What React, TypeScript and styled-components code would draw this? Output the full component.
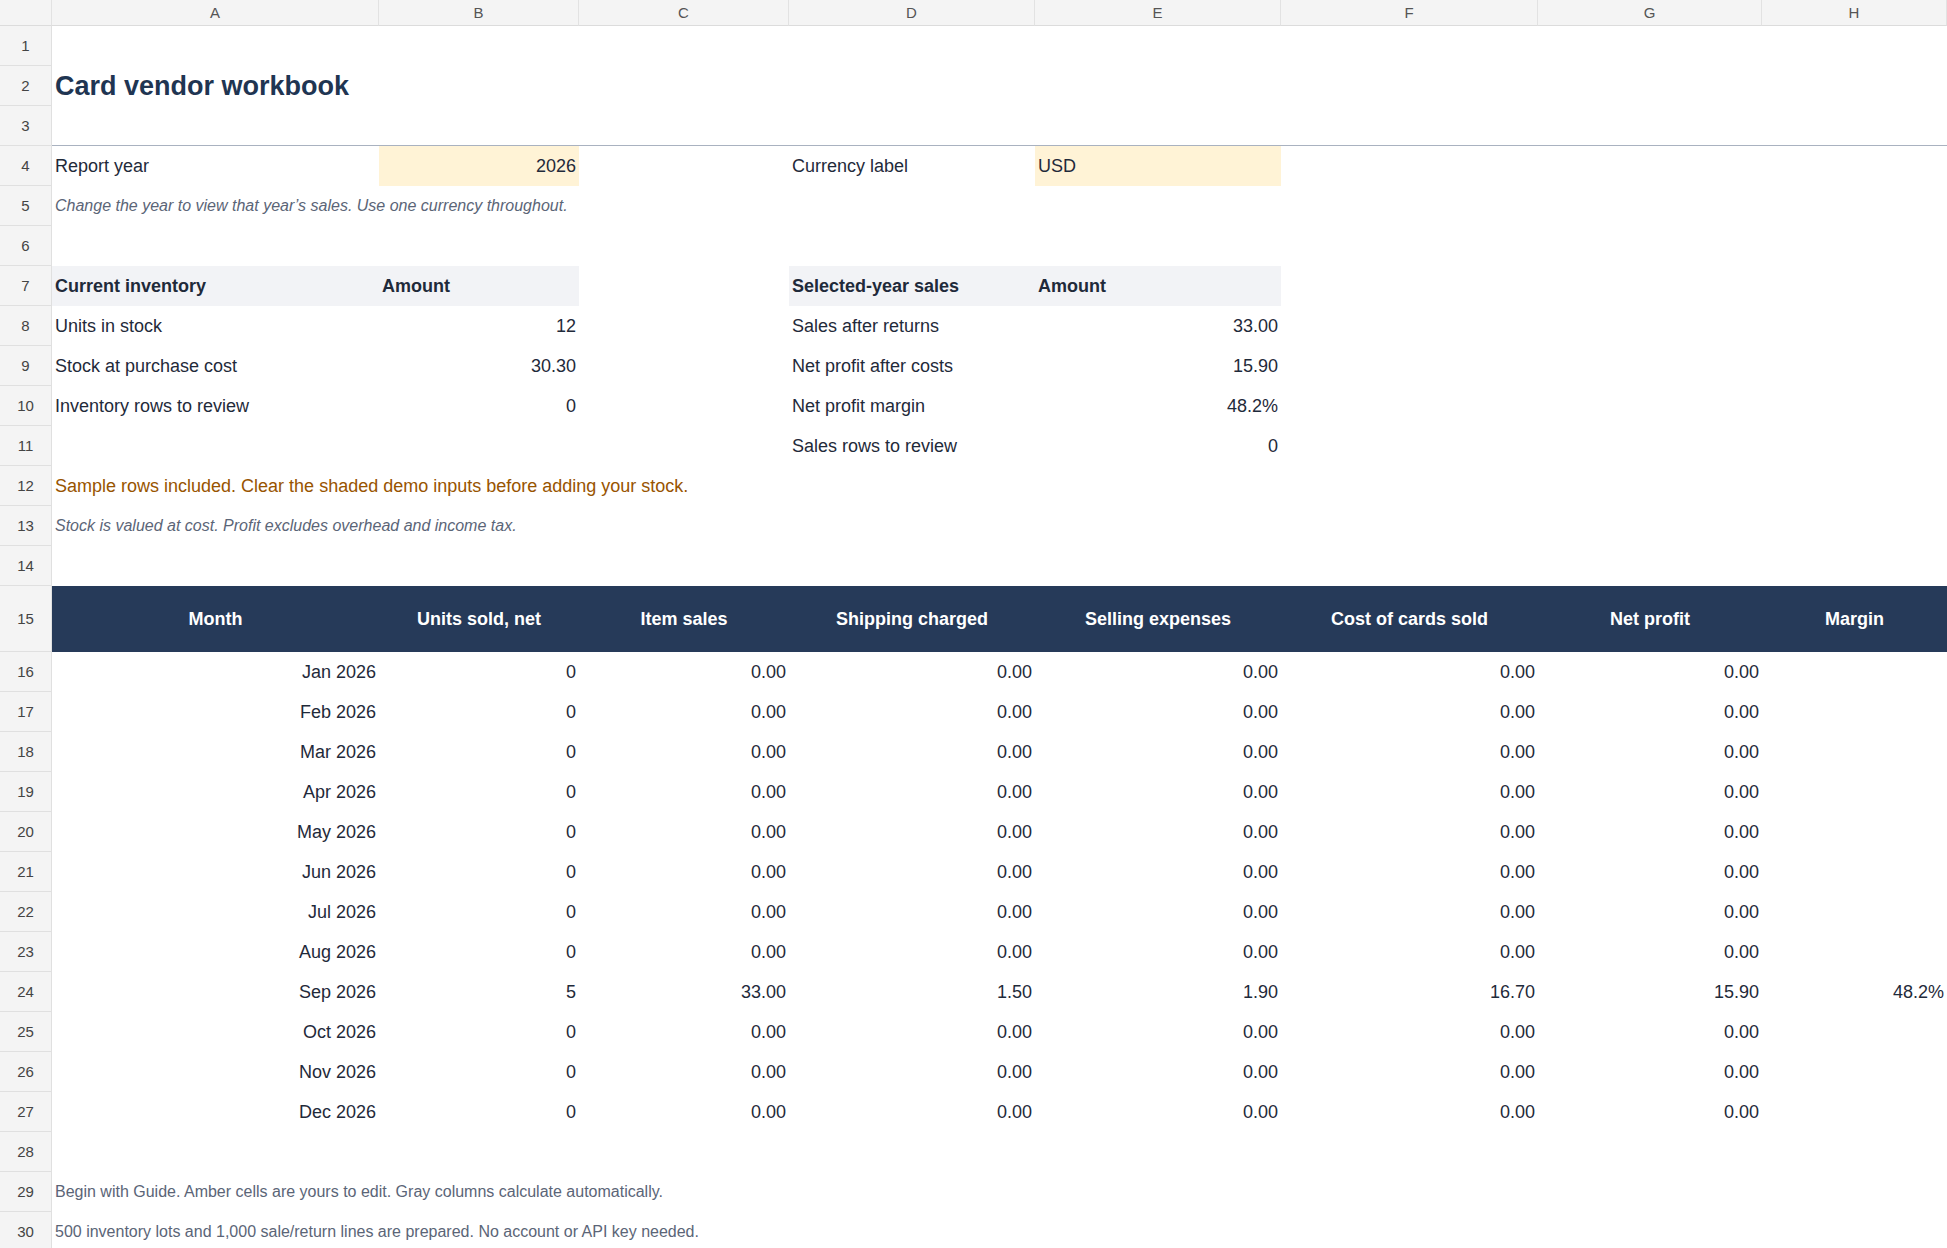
import React from "react";
import styled, { createGlobalStyle } from "styled-components";

const Global = createGlobalStyle`
  html, body { margin: 0; padding: 0; background: #fff; overflow: hidden; }
  body { font-family: "Liberation Sans", Arial, sans-serif; color: #1f2937; }
`;

const COLS = "52px 327px 200px 210px 246px 246px 257px 224px 1fr";

const Sheet = styled.div`
  width: 1947px;
  height: 1248px;
  overflow: hidden;
`;

const Row = styled.div<{ $h?: number; $rule?: boolean }>`
  display: grid;
  grid-template-columns: ${COLS};
  height: ${(p) => p.$h ?? 40}px;
  box-sizing: border-box;
`;

const HeadCell = styled.div`
  background: #f4f4f4;
  border-right: 1px solid #e2e2e2;
  border-bottom: 1px solid #dcdcdc;
  display: flex;
  align-items: center;
  justify-content: center;
  font-size: 15px;
  color: #555;
`;

const RowNum = styled.div`
  background: #f4f4f4;
  border-right: 1px solid #e0e0e0;
  border-bottom: 1px solid #e0e0e0;
  display: flex;
  align-items: center;
  justify-content: center;
  font-size: 15px;
  color: #444;
`;

type CellProps = {
  $align?: "left" | "right" | "center";
  $bold?: boolean;
  $italic?: boolean;
  $bg?: string;
  $color?: string;
  $size?: number;
  $span?: number;
  $rule?: boolean;
};

const Cell = styled.div<CellProps>`
  grid-column: span ${(p) => p.$span ?? 1};
  display: flex;
  align-items: center;
  justify-content: ${(p) =>
    p.$align === "right" ? "flex-end" : p.$align === "center" ? "center" : "flex-start"};
  padding: 0 3px;
  white-space: nowrap;
  overflow: visible;
  font-size: ${(p) => p.$size ?? 18}px;
  font-weight: ${(p) => (p.$bold ? 700 : 400)};
  font-style: ${(p) => (p.$italic ? "italic" : "normal")};
  background: ${(p) => p.$bg ?? "transparent"};
  color: ${(p) => p.$color ?? "#1f2a3a"};
  border-bottom: ${(p) => (p.$rule ? "1.5px solid #a9b2c0" : "none")};
  box-sizing: border-box;
`;

const Title = styled(Cell)`
  font-size: 27px;
  font-weight: 700;
  color: #1f3552;
`;

const Band = styled.div`
  grid-column: 2 / -1;
  display: grid;
  grid-template-columns: 327px 200px 210px 246px 246px 257px 224px 1fr;
  background: #263a59;
`;

const BandCell = styled.div`
  display: flex;
  align-items: center;
  justify-content: center;
  color: #fff;
  font-weight: 700;
  font-size: 18px;
`;

const AMBER = "#fff3d6";
const SOFT = "#f2f3f6";
const NOTE = "#5b6577";

const letters = ["A", "B", "C", "D", "E", "F", "G", "H"];
const months = ["Jan", "Feb", "Mar", "Apr", "May", "Jun", "Jul", "Aug", "Sep", "Oct", "Nov", "Dec"];

const Blank = ({ n }: { n: number }) => (
  <Row>
    <RowNum>{n}</RowNum>
  </Row>
);

export default function App() {
  return (
    <Sheet>
      <Global />
      <Row $h={26}>
        <HeadCell />
        {letters.map((l) => (
          <HeadCell key={l}>{l}</HeadCell>
        ))}
      </Row>
      <Blank n={1} />
      <Row>
        <RowNum>2</RowNum>
        <Title $span={3}>Card vendor workbook</Title>
      </Row>
      <Row>
        <RowNum>3</RowNum>
        <Cell $span={8} $rule />
      </Row>
      <Row>
        <RowNum>4</RowNum>
        <Cell>Report year</Cell>
        <Cell $align="right" $bg={AMBER}>2026</Cell>
        <Cell />
        <Cell>Currency label</Cell>
        <Cell $bg={AMBER}>USD</Cell>
      </Row>
      <Row>
        <RowNum>5</RowNum>
        <Cell $span={3} $italic $color={NOTE} $size={16}>
          Change the year to view that year’s sales. Use one currency throughout.
        </Cell>
      </Row>
      <Blank n={6} />
      <Row>
        <RowNum>7</RowNum>
        <Cell $bold $bg={SOFT}>Current inventory</Cell>
        <Cell $bold $bg={SOFT}>Amount</Cell>
        <Cell />
        <Cell $bold $bg={SOFT}>Selected-year sales</Cell>
        <Cell $bold $bg={SOFT}>Amount</Cell>
      </Row>
      <Row>
        <RowNum>8</RowNum>
        <Cell>Units in stock</Cell>
        <Cell $align="right">12</Cell>
        <Cell />
        <Cell>Sales after returns</Cell>
        <Cell $align="right">33.00</Cell>
      </Row>
      <Row>
        <RowNum>9</RowNum>
        <Cell>Stock at purchase cost</Cell>
        <Cell $align="right">30.30</Cell>
        <Cell />
        <Cell>Net profit after costs</Cell>
        <Cell $align="right">15.90</Cell>
      </Row>
      <Row>
        <RowNum>10</RowNum>
        <Cell>Inventory rows to review</Cell>
        <Cell $align="right">0</Cell>
        <Cell />
        <Cell>Net profit margin</Cell>
        <Cell $align="right">48.2%</Cell>
      </Row>
      <Row>
        <RowNum>11</RowNum>
        <Cell />
        <Cell />
        <Cell />
        <Cell>Sales rows to review</Cell>
        <Cell $align="right">0</Cell>
      </Row>
      <Row>
        <RowNum>12</RowNum>
        <Cell $span={4} $color="#985400">
          Sample rows included. Clear the shaded demo inputs before adding your stock.
        </Cell>
      </Row>
      <Row>
        <RowNum>13</RowNum>
        <Cell $span={3} $italic $color={NOTE} $size={16}>
          Stock is valued at cost. Profit excludes overhead and income tax.
        </Cell>
      </Row>
      <Blank n={14} />
      <Row $h={66}>
        <RowNum>15</RowNum>
        <Band>
          {["Month", "Units sold, net", "Item sales", "Shipping charged", "Selling expenses", "Cost of cards sold", "Net profit", "Margin"].map(
            (h) => (
              <BandCell key={h}>{h}</BandCell>
            )
          )}
        </Band>
      </Row>
      {months.map((m, i) => {
        const sep = m === "Sep";
        const v = sep
          ? ["5", "33.00", "1.50", "1.90", "16.70", "15.90", "48.2%"]
          : ["0", "0.00", "0.00", "0.00", "0.00", "0.00", ""];
        return (
          <Row key={m}>
            <RowNum>{16 + i}</RowNum>
            <Cell $align="right">{m} 2026</Cell>
            {v.map((x, j) => (
              <Cell key={j} $align="right">{x}</Cell>
            ))}
          </Row>
        );
      })}
      <Blank n={28} />
      <Row>
        <RowNum>29</RowNum>
        <Cell $span={4} $color={NOTE} $size={16}>
          Begin with Guide. Amber cells are yours to edit. Gray columns calculate automatically.
        </Cell>
      </Row>
      <Row>
        <RowNum>30</RowNum>
        <Cell $span={4} $color={NOTE} $size={16}>
          500 inventory lots and 1,000 sale/return lines are prepared. No account or API key needed.
        </Cell>
      </Row>
    </Sheet>
  );
}
